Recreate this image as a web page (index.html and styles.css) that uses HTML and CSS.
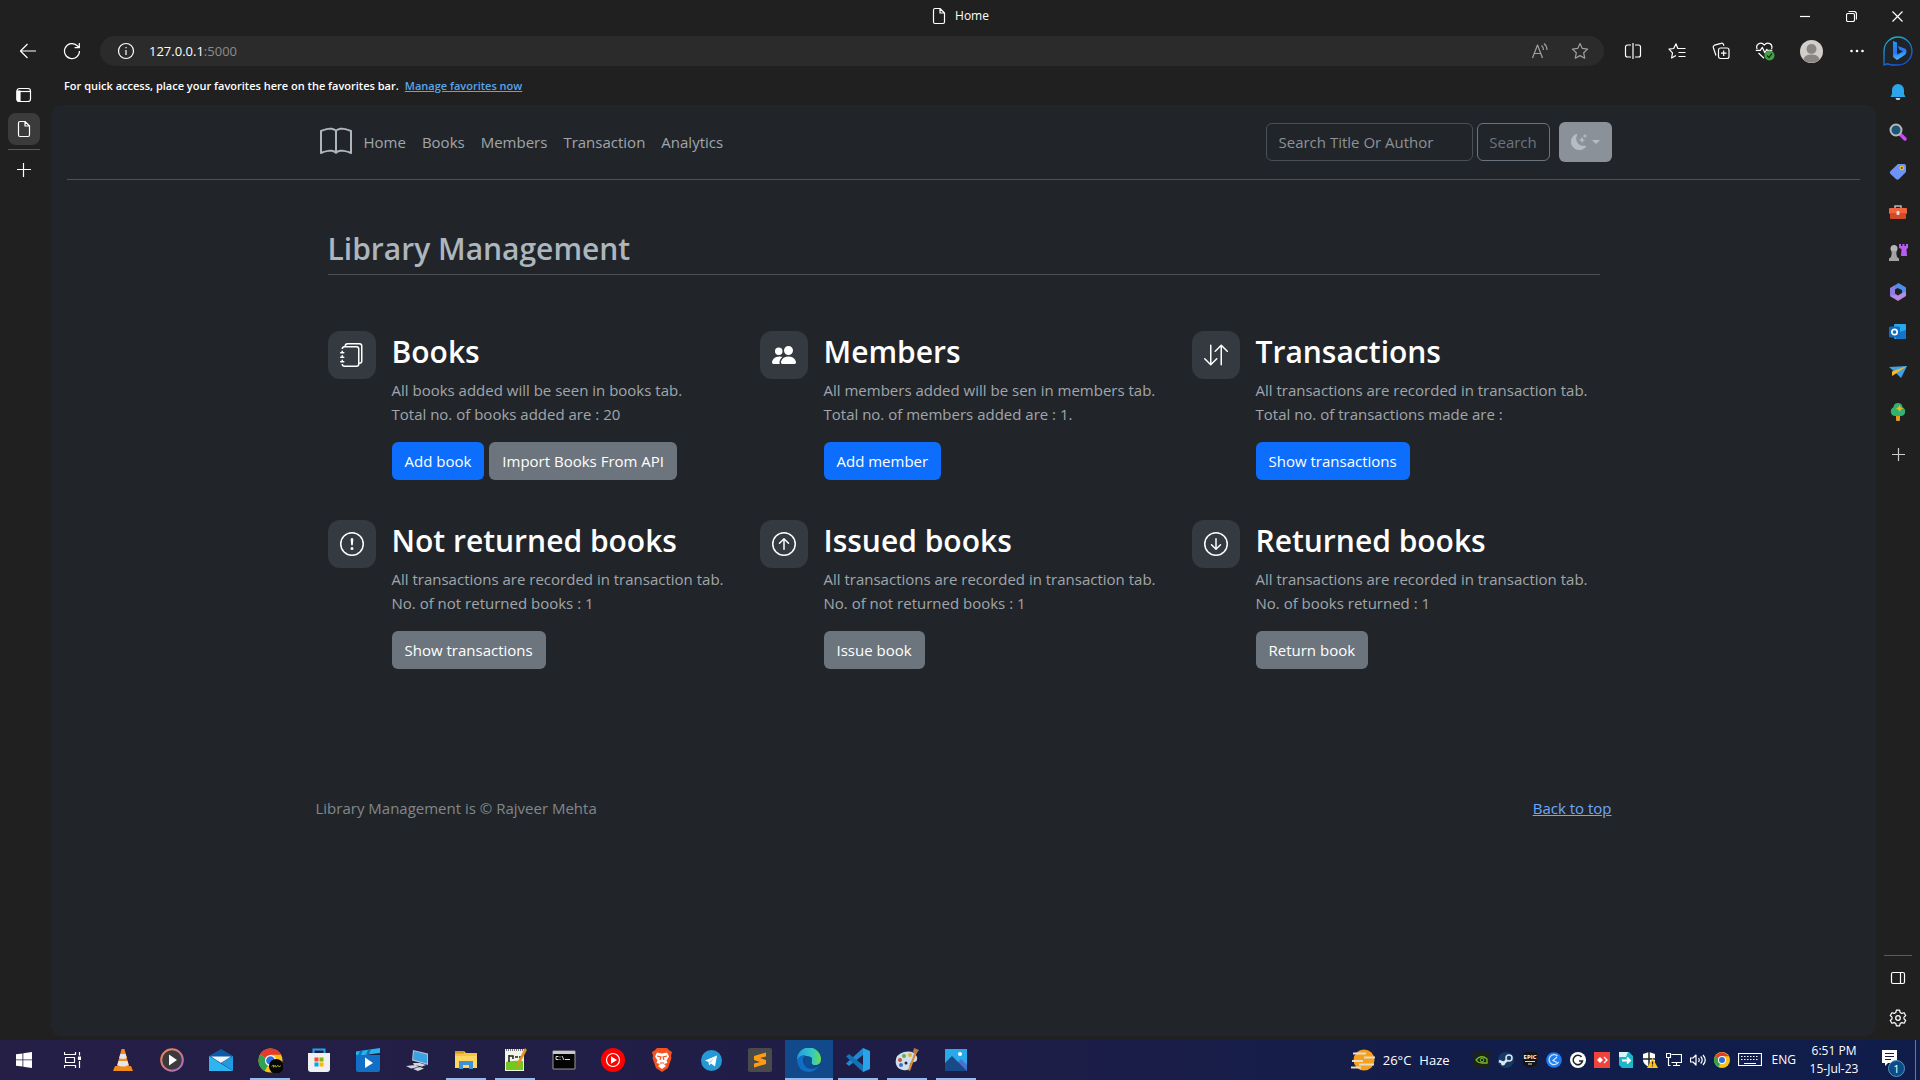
FILE: index.html
```html
<!DOCTYPE html>
<html lang="en">
<head>
<meta charset="utf-8">
<meta name="viewport" content="width=device-width, initial-scale=1">
<title>Home</title>
<link rel="stylesheet" href="styles.css">
</head>
<body>
<header class="titlebar">
  <div class="window-title">
    <svg class="line" width="16" height="18" viewBox="0 0 16 18"><path d="M4 1.500h5l4.500 4.500v9a1.500 1.500 0 0 1-1.500 1.500H4A1.500 1.500 0 0 1 2.500 15V3A1.500 1.500 0 0 1 4 1.500zM9 1.500V6h4.500"/></svg>
    <span>Home</span>
  </div>
  <div class="window-buttons">
    <button aria-label="Minimize"><svg class="line" width="10" height="10" viewBox="0 0 10 10"><path d="M0 5.500h10"/></svg></button>
    <button aria-label="Restore"><svg class="line" width="11" height="11" viewBox="0 0 11 11"><rect x=".5" y="2.500" width="8" height="8" rx="1.500"/><path d="M2.500.5H8A2.500 2.500 0 0 1 10.500 3v5.500"/></svg></button>
    <button aria-label="Close"><svg class="line" width="11" height="11" viewBox="0 0 11 11"><path d="M.5.5l10 10M10.500.5l-10 10"/></svg></button>
  </div>
</header>

<div class="toolbar">
  <div class="nav-buttons">
    <button aria-label="Back"><svg class="line" width="18" height="16" viewBox="0 0 18 16"><path d="M17 8H1.500M8.500 1l-7 7 7 7"/></svg></button>
    <button aria-label="Refresh"><svg class="line" width="18" height="18" viewBox="0 0 18 18"><path d="M16.500 9A7.500 7.500 0 1 1 14 3.500L16 5.500M16.300 1v4.700h-4.700"/></svg></button>
  </div>
  <div class="address">
    <svg class="line" width="18" height="18" viewBox="0 0 18 18"><circle cx="9" cy="9" r="7.500"/><path d="M9 8v5M9 5v1.300"/></svg>
    <span class="url">127.0.0.1<span class="port">:5000</span></span>
    <button class="dim" aria-label="Read aloud"><svg class="line" width="18" height="18" viewBox="0 0 18 18"><path d="M1.500 16L6.500 3l5 13M3.200 11.500h6.600M10.500 3.500q2 1.500 2 4.500M13 1.500q3 2.500 3 6.500"/></svg></button>
    <button class="dim" aria-label="Add to favorites"><svg class="line" width="18" height="18" viewBox="0 0 18 18"><path d="M9 1.500l2.300 4.900 5.300.7-3.900 3.700 1 5.400L9 13.600l-4.700 2.600 1-5.400L1.400 7.100l5.300-.7z"/></svg></button>
  </div>
  <div class="tools">
    <button aria-label="Split screen"><svg class="line" width="18" height="18" viewBox="0 0 18 18"><path d="M7 3H3.500A2 2 0 0 0 1.500 5v8a2 2 0 0 0 2 2H7M11 3h3.500a2 2 0 0 1 2 2v8a2 2 0 0 1-2 2H11M9 1v16"/></svg></button>
    <button aria-label="Favorites"><svg class="line" width="18" height="18" viewBox="0 0 18 18"><path d="M11 6.500H9.800L8 1.800 5.700 6.500 1 7.200l3.500 3.600-.9 5.200L8 13.500M10.500 6.500h7M10.500 10.500h7M10.500 14.500h7"/></svg></button>
    <button aria-label="Collections"><svg class="line" width="18" height="18" viewBox="0 0 18 18"><rect x="6.500" y="6" width="10.500" height="10.500" rx="2"/><path d="M11.700 8.500v5.500M9 11.200h5.500M4 13.500L1.300 5.500a2 2 0 0 1 1.200-2.300L9 1.300a2 2 0 0 1 2.500 1.200l.4 1.300"/></svg></button>
    <button aria-label="Browser essentials"><svg width="20" height="20" viewBox="0 0 20 20"><path class="stroke" d="M2.200 8C0 3.500 6 0 9.300 4 12.500 0 18.500 3 16.500 8M.8 9.300h4.500l2-3 2.500 5.500 2-3.500 1 1h4.500M3.500 12l5.500 5.300"/><circle cx="14.500" cy="14.500" r="5" fill="#46a046"/><path d="M12 14.500l2 2 3-4" fill="none" stroke="#16351a" stroke-width="1.300"/></svg></button>
    <button class="wide" aria-label="Profile"><svg width="23" height="23" viewBox="0 0 23 23"><circle cx="11.500" cy="11.500" r="11.500" fill="#d2cfca"/><circle cx="11.500" cy="9" r="5" fill="#8a8683"/><path d="M3.500 19.500q1-5 8-5t8 5a11.500 11.500 0 0 1-16 0" fill="#8a8683"/></svg></button>
    <button aria-label="Settings and more"><svg width="16" height="4" viewBox="0 0 16 4" fill="#fff"><circle cx="2.500" cy="2" r="1.300"/><circle cx="8" cy="2" r="1.300"/><circle cx="13.500" cy="2" r="1.300"/></svg></button>
    <button class="bing" aria-label="Bing"><svg width="30" height="30" viewBox="0 0 30 30"><defs><linearGradient id="ring" x1="0" y1="0" x2=".5" y2="1"><stop stop-color="#1db8d8"/><stop offset="1" stop-color="#1357d8"/></linearGradient><linearGradient id="bee" x1="0" y1="0" x2=".2" y2="1"><stop stop-color="#1d9bf3"/><stop offset=".6" stop-color="#2874f4"/><stop offset="1" stop-color="#49b6fa"/></linearGradient></defs><path d="M1 29V15A14 14 0 1 1 15 29H8q-3.500-2-7 0z" fill="#202429" stroke="url(#ring)" stroke-width="1.300"/><path d="M10 5l4 1.500v12l6-3-3.500-1.800-1.500-3.700 8 3q1.500 4-2 6.500L14 24l-4-3z" fill="url(#bee)"/></svg></button>
  </div>
</div>

<div class="favorites">
  <span>For quick access, place your favorites here on the favorites bar.</span>
  <a href="#">Manage favorites now</a>
</div>

<div class="workspace">
  <nav class="tabstrip" aria-label="Tabs">
    <button aria-label="Tab actions"><svg class="line" width="16" height="16" viewBox="0 0 16 16"><rect x="1" y="1.500" width="13.500" height="13" rx="2.500"/><path d="M1 4.500h13.500"/><path d="M1 4h3v10.500H3a2 2 0 0 1-2-2z" fill="#fff"/></svg></button>
    <button class="current" aria-label="Home tab"><svg class="line" width="16" height="18" viewBox="0 0 16 18"><path d="M4 1.500h5l4.500 4.500v9a1.500 1.500 0 0 1-1.500 1.500H4A1.500 1.500 0 0 1 2.500 15V3A1.500 1.500 0 0 1 4 1.500zM9 1.500V6h4.500"/></svg></button>
    <hr>
    <button aria-label="New tab"><svg class="line" width="14" height="14" viewBox="0 0 14 14"><path d="M6.500 0v14M0 6.500h14"/></svg></button>
  </nav>

  <div class="page">
    <header class="site-header">
      <div class="container navbar">
        <a class="brand" href="#" aria-label="Library"><svg width="32" height="32" viewBox="0 0 16 16" fill="currentColor"><path d="M1 2.828c.885-.37 2.154-.769 3.388-.893 1.330-.134 2.458.063 3.112.752v9.746c-.935-.53-2.120-.603-3.213-.493-1.180.12-2.370.461-3.287.811zm7.500-.141c.654-.689 1.782-.886 3.112-.752 1.234.124 2.503.523 3.388.893v9.923c-.918-.35-2.107-.692-3.287-.81-1.094-.111-2.278-.039-3.213.492zM8 1.783C7.015.936 5.587.81 4.287.94c-1.514.153-3.042.672-3.994 1.105A.5.5 0 0 0 0 2.500v11a.5.5 0 0 0 .707.455c.882-.4 2.303-.881 3.680-1.020 1.409-.142 2.590.087 3.223.877a.5.5 0 0 0 .78 0c.633-.79 1.814-1.019 3.222-.877 1.378.139 2.800.62 3.681 1.020A.5.5 0 0 0 16 13.500v-11a.5.5 0 0 0-.293-.455c-.952-.433-2.480-.952-3.994-1.105C10.413.809 8.985.936 8 1.783"/></svg></a>
        <nav class="links">
          <a href="#">Home</a><a href="#">Books</a><a href="#">Members</a><a href="#">Transaction</a><a href="#">Analytics</a>
        </nav>
        <form class="search">
          <input type="search" placeholder="Search Title Or Author" aria-label="Search title or author">
          <button type="button" class="btn outline">Search</button>
        </form>
        <button class="theme" aria-label="Toggle theme"><svg width="16" height="16" viewBox="0 0 16 16" fill="currentColor"><path d="M6 .278a.77.77 0 0 1 .08.858 7.200 7.200 0 0 0-.878 3.460c0 4.021 3.278 7.277 7.318 7.277q.792-.001 1.533-.16a.79.79 0 0 1 .81.316.73.73 0 0 1-.031.893A8.350 8.350 0 0 1 8.344 16C3.734 16 0 12.286 0 7.710 0 4.266 2.114 1.312 5.124.06A.75.75 0 0 1 6 .278"/><path d="M10.794 3.148a.217.217 0 0 1 .412 0l.387 1.162c.173.518.579.924 1.097 1.097l1.162.387a.217.217 0 0 1 0 .412l-1.162.387a1.730 1.730 0 0 0-1.097 1.097l-.387 1.162a.217.217 0 0 1-.412 0l-.387-1.162A1.730 1.730 0 0 0 9.310 6.593l-1.162-.387a.217.217 0 0 1 0-.412l1.162-.387a1.730 1.730 0 0 0 1.097-1.097zM13.863.099a.145.145 0 0 1 .274 0l.258.774c.115.346.386.617.732.732l.774.258a.145.145 0 0 1 0 .274l-.774.258a1.160 1.160 0 0 0-.732.732l-.258.774a.145.145 0 0 1-.274 0l-.258-.774a1.160 1.160 0 0 0-.732-.732l-.774-.258a.145.145 0 0 1 0-.274l.774-.258c.346-.115.617-.386.732-.732z"/></svg><i class="caret"></i></button>
      </div>
    </header>

    <main class="container content">
      <h1>Library Management</h1>
      <div class="features">
        <section class="feature">
          <div class="badge"><svg width="24" height="24" viewBox="0 0 16 16" fill="currentColor"><path d="M5 0h8a2 2 0 0 1 2 2v10a2 2 0 0 1-2 2 2 2 0 0 1-2 2H3a2 2 0 0 1-2-2h1a1 1 0 0 0 1 1h8a1 1 0 0 0 1-1V4a1 1 0 0 0-1-1H3a1 1 0 0 0-1 1H1a2 2 0 0 1 2-2h8a2 2 0 0 1 2 2v9a1 1 0 0 0 1-1V2a1 1 0 0 0-1-1H5a1 1 0 0 0-1 1H3a2 2 0 0 1 2-2"/><path d="M1 6v-.5a.5.5 0 0 1 1 0V6h.5a.5.5 0 0 1 0 1h-2a.5.5 0 0 1 0-1zm0 3v-.5a.5.5 0 0 1 1 0V9h.5a.5.5 0 0 1 0 1h-2a.5.5 0 0 1 0-1zm0 2.500v.5H.5a.5.5 0 0 0 0 1h2a.5.5 0 0 0 0-1H2v-.5a.5.5 0 0 0-1 0"/></svg></div>
          <div>
            <h2>Books</h2>
            <p>All books added will be seen in books tab.<br>Total no. of books added are : 20</p>
            <div class="actions"><button class="btn primary">Add book</button><button class="btn secondary">Import Books From API</button></div>
          </div>
        </section>
        <section class="feature">
          <div class="badge"><svg width="24" height="24" viewBox="0 0 16 16" fill="currentColor"><path d="M7 14s-1 0-1-1 1-4 5-4 5 3 5 4-1 1-1 1zm4-6a3 3 0 1 0 0-6 3 3 0 0 0 0 6m-5.784 6A2.240 2.240 0 0 1 5 13c0-1.355.68-2.750 1.936-3.720A6.300 6.300 0 0 0 5 9c-4 0-5 3-5 4s1 1 1 1zM4.500 8a2.500 2.500 0 1 0 0-5 2.500 2.500 0 0 0 0 5"/></svg></div>
          <div>
            <h2>Members</h2>
            <p>All members added will be sen in members tab.<br>Total no. of members added are : 1.</p>
            <div class="actions"><button class="btn primary">Add member</button></div>
          </div>
        </section>
        <section class="feature">
          <div class="badge"><svg width="24" height="24" viewBox="0 0 16 16" fill="currentColor"><path d="M11.500 15a.5.5 0 0 0 .5-.5V2.707l3.146 3.147a.5.5 0 0 0 .708-.708l-4-4a.5.5 0 0 0-.708 0l-4 4a.5.5 0 1 0 .708.708L11 2.707V14.500a.5.5 0 0 0 .5.5m-7-14a.5.5 0 0 1 .5.5v11.793l3.146-3.147a.5.5 0 0 1 .708.708l-4 4a.5.5 0 0 1-.708 0l-4-4a.5.5 0 0 1 .708-.708L4 13.293V1.500a.5.5 0 0 1 .5-.5"/></svg></div>
          <div>
            <h2>Transactions</h2>
            <p>All transactions are recorded in transaction tab.<br>Total no. of transactions made are :</p>
            <div class="actions"><button class="btn primary">Show transactions</button></div>
          </div>
        </section>
        <section class="feature">
          <div class="badge"><svg width="24" height="24" viewBox="0 0 16 16" fill="currentColor"><path d="M8 15A7 7 0 1 1 8 1a7 7 0 0 1 0 14m0 1A8 8 0 1 0 8 0a8 8 0 0 0 0 16"/><path d="M7.002 11a1 1 0 1 1 2 0 1 1 0 0 1-2 0M7.100 4.995a.905.905 0 1 1 1.800 0l-.35 3.507a.552.552 0 0 1-1.100 0z"/></svg></div>
          <div>
            <h2>Not returned books</h2>
            <p>All transactions are recorded in transaction tab.<br>No. of not returned books : 1</p>
            <div class="actions"><button class="btn secondary">Show transactions</button></div>
          </div>
        </section>
        <section class="feature">
          <div class="badge"><svg width="24" height="24" viewBox="0 0 16 16" fill="currentColor"><path d="M1 8a7 7 0 1 0 14 0A7 7 0 0 0 1 8m15 0A8 8 0 1 1 0 8a8 8 0 0 1 16 0m-7.500 3.500a.5.5 0 0 1-1 0V5.707L5.354 7.854a.5.5 0 1 1-.708-.708l3-3a.5.5 0 0 1 .708 0l3 3a.5.5 0 0 1-.708.708L8.500 5.707z"/></svg></div>
          <div>
            <h2>Issued books</h2>
            <p>All transactions are recorded in transaction tab.<br>No. of not returned books : 1</p>
            <div class="actions"><button class="btn secondary">Issue book</button></div>
          </div>
        </section>
        <section class="feature">
          <div class="badge"><svg width="24" height="24" viewBox="0 0 16 16" fill="currentColor"><path d="M1 8a7 7 0 1 0 14 0A7 7 0 0 0 1 8m15 0A8 8 0 1 1 0 8a8 8 0 0 1 16 0M8.500 4.500a.5.5 0 0 0-1 0v5.793L5.354 8.146a.5.5 0 1 0-.708.708l3 3a.5.5 0 0 0 .708 0l3-3a.5.5 0 0 0-.708-.708L8.500 10.293z"/></svg></div>
          <div>
            <h2>Returned books</h2>
            <p>All transactions are recorded in transaction tab.<br>No. of books returned : 1</p>
            <div class="actions"><button class="btn secondary">Return book</button></div>
          </div>
        </section>
      </div>
    </main>

    <footer class="container site-footer">
      <span>Library Management is © Rajveer Mehta</span>
      <a href="#">Back to top</a>
    </footer>
  </div>

  <aside class="sidebar" aria-label="Sidebar">
    <button aria-label="Notifications"><svg width="18" height="18" viewBox="0 0 18 18"><path d="M9 1a6 6 0 0 0-6 6v4l-1.500 3h15L15 11V7a6 6 0 0 0-6-6" fill="#2ba5ec"/><path d="M6.500 15h5l-1 2h-3z" fill="#c9c9c9"/></svg></button>
    <button aria-label="Search"><svg width="18" height="18" viewBox="0 0 18 18"><path d="M11 11l5 5" stroke="#c94bf0" stroke-width="3.500" stroke-linecap="round"/><circle cx="7" cy="7" r="5.500" fill="#1c5576" stroke="#b8b8b8" stroke-width="2"/></svg></button>
    <button aria-label="Shopping"><svg width="18" height="18" viewBox="0 0 18 18"><path d="M9 1h6a2 2 0 0 1 2 2v6l-7 7q-1.500 1.500-3 0L1.500 11Q0 9.500 1.500 8z" fill="#6f92f8"/><circle cx="12.800" cy="5" r="1.700" fill="#4a4a30" stroke="#e8c522" stroke-width="1.300"/></svg></button>
    <button aria-label="Tools"><svg width="18" height="18" viewBox="0 0 18 18"><path d="M6 6V3h6v3" fill="none" stroke="#b8b8b8" stroke-width="1.500"/><rect y="5" width="18" height="6" rx="1" fill="#f0653d"/><path d="M1 10h16v5a1 1 0 0 1-1 1H2a1 1 0 0 1-1-1z" fill="#d54a26"/><rect x="7.500" y="8" width="3" height="4" rx="1" fill="#ddd"/></svg></button>
    <button aria-label="Games"><svg width="20" height="20" viewBox="0 0 20 20"><path d="M11 2h2v2h1.500V2h2v2H18V2h2v4l-1.500 1 .5 7h-6l.5-7L11 6z" fill="#b95cf2"/><circle cx="6" cy="6.500" r="3.500" fill="#b5b5b5"/><path d="M3 9.500h6l-.8 1.500.8 4 2 1.500V19H1v-2.500L3 15l.8-4z" fill="#a3a3a3"/></svg></button>
    <button aria-label="Microsoft 365"><svg width="18" height="18" viewBox="0 0 18 18"><path d="M9.500 0L6 2.500v8L9 12.500 4.500 15 1 13V5z" fill="#8e7ce0"/><path d="M9.500 0L17 4.500V13l-4-2V7L8.500 5 6 6.500v-4z" fill="#4a8fe8"/><path d="M17 8.500V13l-8 5-8-5 3.500-1 4.500.5 4-2.500z" fill="#b48ae2"/></svg></button>
    <button aria-label="Outlook"><svg width="18" height="18" viewBox="0 0 18 18"><rect x="5" y="1" width="12" height="15" rx="1" fill="#28a8ea"/><path d="M8 10l9-3v9H7z" fill="#1374cc"/><rect y="3.500" width="11" height="11" rx="1.500" fill="#0f6cc4"/><circle cx="5.500" cy="9" r="2.700" fill="none" stroke="#fff" stroke-width="1.700"/></svg></button>
    <button aria-label="Drop"><svg width="18" height="18" viewBox="0 0 18 18"><path d="M0 4l18-1-6 12-4-4z" fill="#3ca0ee"/><path d="M18 3L3 8.500V13l4-2.500z" fill="#f5b923"/></svg></button>
    <button aria-label="E-tree"><svg width="18" height="18" viewBox="0 0 18 18"><rect x="7" y="11" width="4" height="7" rx="1" fill="#e59b20"/><path d="M9 0q4 0 4.500 4Q17 6 16 10q-1 3-4 3H6q-3 0-4-3-1-4 2.500-6Q5 0 9 0" fill="#2fb36f"/><path d="M10.500 2l1.200 2.300L14 5.500l-2.300 1.200L10.500 9 9.300 6.700 7 5.500l2.300-1.200z" fill="#f0b323"/></svg></button>
    <button class="add" aria-label="Customize"><svg class="line faint" width="13" height="13" viewBox="0 0 13 13"><path d="M6.500 0v13M0 6.500h13"/></svg></button>
    <div class="spacer"></div>
    <hr>
    <button aria-label="Hide sidebar"><svg class="line" width="16" height="16" viewBox="0 0 16 16"><rect x="1.500" y="2.500" width="13" height="11" rx="1.500"/><path d="M10.500 2.500v11"/></svg></button>
    <button aria-label="Settings"><svg class="line" width="18" height="18" viewBox="0 0 18 18"><circle cx="9" cy="9" r="2.300"/><path d="M7.400 1.200h3.200l.6 2.300 1.600.9 2.300-.7 1.600 2.800-1.700 1.600v1.800l1.700 1.600-1.600 2.800-2.300-.7-1.600.9-.6 2.300H7.400l-.6-2.300-1.600-.9-2.300.7-1.600-2.800L3 9.900V8.100L1.300 6.500l1.600-2.800 2.300.7 1.600-.9z"/></svg></button>
  </aside>
</div>

<footer class="taskbar">
  <div class="system">
    <button aria-label="Start"><svg width="16" height="16" viewBox="0 0 16 16" fill="#fff"><path d="M0 2.300L6.500 1.400v6.100H0zM7.300 1.300L16 0v7.500H7.300zM0 8.300h6.500v6.300L0 13.700zM7.300 8.300H16V16l-8.700-1.200z"/></svg></button>
    <button aria-label="Task view"><svg class="line" width="17" height="16" viewBox="0 0 17 16"><path d="M.5 0v2.500h11V0M.5 16v-2.500h11V16M1.500 5.500h9v5h-9zM15.500 0v3.500M15.500 9v7"/><rect x="14.500" y="5" width="2" height="2.500" fill="#fff"/></svg></button>
  </div>
  <div class="apps">
    <button aria-label="VLC"><svg width="24" height="24" viewBox="0 0 24 24"><path d="M4 18h16l2 5H2z" fill="#f08a1c"/><path d="M10.500 1h3L18 18q-6 4-12 0z" fill="#f28a1e"/><path d="M9.300 6h5.400l1.100 4q-3.800 2-7.600 0zM7.500 13h9l1.200 4q-5.700 3-11.400 0z" fill="#e3e6ea"/></svg></button>
    <button aria-label="Media player"><svg width="24" height="24" viewBox="0 0 24 24"><defs><linearGradient id="mp" x1="0" y1="0" x2="1" y2="1"><stop stop-color="#f38a3e"/><stop offset="1" stop-color="#a76bd0"/></linearGradient></defs><circle cx="12" cy="12" r="10.800" fill="#3b3b3f" stroke="url(#mp)" stroke-width="2"/><path d="M9 6.500l8 5.500-8 5.500z" fill="#fff"/></svg></button>
    <button aria-label="Mail"><svg width="24" height="24" viewBox="0 0 24 24"><path d="M0 8l12-7 12 7v5H0z" fill="#0b5ba8"/><path d="M2 8.500h20L12 15z" fill="#f3f3f3"/><path d="M0 8l24 15H0z" fill="#2fb4f2"/><path d="M24 8v15L12 15z" fill="#2399e0"/></svg></button>
    <button class="running" aria-label="Chrome"><svg width="25" height="25" viewBox="0 0 24 24"><circle cx="12" cy="12" r="11.500" fill="#fbc116"/><path d="M12 12L6.500 22A11.500 11.500 0 0 1 2 6.200z" fill="#31a350"/><path d="M12 12L2 6.200A11.500 11.500 0 0 1 22 6.500H12z" fill="#e33b2e"/><circle cx="12" cy="12" r="5.300" fill="#fff"/><circle cx="12" cy="12" r="4.200" fill="#2c6fe0"/><circle cx="17.500" cy="17.500" r="7" fill="#050505"/><path d="M13 17.500l2-1v2l1.500-2 1 2 1.500-2 1 1.500 2-1" fill="none" stroke="#a6b32c" stroke-width=".9"/></svg></button>
    <button aria-label="Microsoft Store"><svg width="24" height="24" viewBox="0 0 24 24"><path d="M6.500 6V1.500h11V6" fill="none" stroke="#23a5ea" stroke-width="2"/><path d="M1 5h22v16a3 3 0 0 1-3 3H4a3 3 0 0 1-3-3z" fill="#f0f0f0"/><path d="M7.500 9.500h4v4h-4z" fill="#f25022"/><path d="M12.500 9.500h4v4h-4z" fill="#7fba00"/><path d="M7.500 14.500h4v4h-4z" fill="#00a4ef"/><path d="M12.500 14.500h4v4h-4z" fill="#ffb900"/></svg></button>
    <button aria-label="Movies"><svg width="24" height="24" viewBox="0 0 24 24"><path d="M0 3.500L24 0v5L0 8z" fill="#25b4f1"/><path d="M4 3l3-.5L5 7H2zM12 2l3-.5L13 6h-3z" fill="#0c71bd"/><path d="M0 7h24v15a2 2 0 0 1-2 2H2a2 2 0 0 1-2-2z" fill="#116fc6"/><path d="M9 9.500l8 5.500-8 5z" fill="#fff"/></svg></button>
    <button aria-label="Remote desktop"><svg width="24" height="24" viewBox="0 0 24 24"><path d="M8 2l15 3.500V17L7 12.500z" fill="#b4c0cc"/><path d="M9 3.200l13 3.300v9L8 11.500z" fill="#3aa3e8"/><path d="M8 15l7 0 6 2-4 1.500-8-1.500zM1 18l9-1 4 2-8 1.500zM8 21l7-2 4 1.500-6 2.500z" fill="#cfd5da"/></svg></button>
    <button class="running" aria-label="File explorer"><svg width="24" height="24" viewBox="0 0 24 24"><path d="M1 3h9l2 2h11v15H1z" fill="#f6c445"/><path d="M1 3h9v2.500H1z" fill="#d99a1a"/><path d="M1 8h22v12H1z" fill="#fdd663"/><path d="M5 21v-8h14v8h-4v-4H9v4z" fill="#3f90d4"/></svg></button>
    <button class="running" aria-label="Notepad++"><svg width="24" height="24" viewBox="0 0 24 24"><path d="M2 1h19v22H2z" fill="#f2f5e8"/><path d="M3 14q9-2 17-1v9H3z" fill="#72c81e"/><path d="M3 2h17" stroke="#777" stroke-width="2" stroke-dasharray="1 1"/><path d="M6 7v7M6 8h4v3M12 9h3M16 9h2" stroke="#222" stroke-width="1.500" fill="none"/><path d="M22 0l2 2-8 15-3 2 1-4z" fill="#dd9420"/></svg></button>
    <button aria-label="Command prompt"><svg width="24" height="24" viewBox="0 0 24 24"><path d="M1 3h22v18H1z" fill="#030303" stroke="#999"/><path d="M1 3h22v3H1z" fill="#c8c8c8"/><path d="M4 8.500h2.500M4 8.500v3h2.500M8 8.500v1M8 11v1M10 8l2 4M13 11.500h5" stroke="#ddd" fill="none"/></svg></button>
    <button aria-label="YouTube Music"><svg width="24" height="24" viewBox="0 0 24 24"><circle cx="12" cy="12" r="12" fill="#f00"/><circle cx="12" cy="12" r="6.500" fill="none" stroke="#fff" stroke-width="1.200"/><path d="M10 8.300l6 3.700-6 3.700z" fill="#fff"/></svg></button>
    <button aria-label="Brave"><svg width="22" height="24" viewBox="0 0 22 24"><path d="M6 0h10l2.500 2.500L21 4l-1 4 .5 2L17 20l-6 4-6-4L1.500 10 2 8 1 4l2.500-1.500z" fill="#f4511e"/><path d="M6 4.500l5 1 5-1 2 4-2.500 4 1 2.500L13 16l2 2-4 3-4-3 2-2-3.500-1 1-2.500L4 8.500z" fill="#fff"/><path d="M6 8l4 1-1 3M16 8l-4 1 1 3M9 15h4" fill="none" stroke="#f4511e" stroke-width="1.200"/></svg></button>
    <button aria-label="Telegram"><svg width="21" height="21" viewBox="0 0 21 21"><circle cx="10.500" cy="10.500" r="10.500" fill="#2499d4"/><path d="M4 10.500L16 5.500l-2 11-4-3-2 2-.5-3.500z" fill="#fff"/><path d="M8 12l5-4-3.500 5z" fill="#a7cfe8"/></svg></button>
    <button aria-label="Sublime Text"><svg width="24" height="24" viewBox="0 0 24 24"><rect width="24" height="24" rx="2" fill="#4a4a4a"/><path d="M6 8l12-3.500v4L12 10l6 2v4L6 19.500v-4l6-1.500-6-2z" fill="#ff9b13"/></svg></button>
    <button class="active" aria-label="Edge"><svg width="24" height="24" viewBox="0 0 24 24"><defs><linearGradient id="edge"><stop stop-color="#249ce0"/><stop offset=".6" stop-color="#32c6c9"/><stop offset="1" stop-color="#67e04d"/></linearGradient></defs><path d="M0 12A12 12 0 0 1 24 11q0 6-6 6-5 0-3-4 0-5-6-5-6 0-9 4" fill="url(#edge)"/><path d="M0 12q2-5 9-5-4 2-3 7 2 7 9 7 4 0 7-3-4 6-11 6Q1 23 0 12" fill="#0f6dc4"/><path d="M9 11q3-4 6-1-2 4 1 7-6-1-6 3-4-4-1-9" fill="#0c4f98"/></svg></button>
    <button class="running" aria-label="Visual Studio Code"><svg width="24" height="24" viewBox="0 0 24 24"><path d="M17 0l7 3v18l-7 3z" fill="#29a4ea"/><path d="M17 0v7L3 18l-3-2.500z" fill="#2187cf"/><path d="M17 24v-7L3 6 0 8.500z" fill="#1372b6"/></svg></button>
    <button class="running" aria-label="Paint"><svg width="24" height="24" viewBox="0 0 24 24"><path d="M1 16Q-1 7 9 4q10-2 13 5 1 6-5 5-3 1-2 5-1 4-7 3Q2 21 1 16" fill="#cde0ec"/><circle cx="5" cy="12" r="2" fill="#d44a3a"/><circle cx="9" cy="8" r="2" fill="#69ad4c"/><circle cx="15" cy="7" r="2" fill="#e5b02c"/><circle cx="6" cy="17" r="2" fill="#3b73c4"/><circle cx="11" cy="15" r="1.500" fill="#22204a"/><path d="M20 3l2 1-7 19-2-1z" fill="#d98a3a"/><path d="M19 0l5 2-3 4-3-2z" fill="#b97c49"/></svg></button>
    <button class="running" aria-label="Photos"><svg width="22" height="22" viewBox="0 0 22 22"><path d="M0 0h22v22H0z" fill="#29a8ea"/><path d="M11 15l5-5 6 6v6h-8z" fill="#4b6fd4"/><path d="M0 14l7-7 15 15H0z" fill="#174a86"/><circle cx="15" cy="5" r="2" fill="#fff"/></svg></button>
  </div>
  <div class="weather">
    <svg width="24" height="24" viewBox="0 0 24 24"><circle cx="13" cy="12" r="10.500" fill="#f7a01c"/><path d="M2 5.500h13M13 9.500h11M1 13h11M8 16.500h15M0 19.500h10" stroke="#e6dccb" stroke-width="2"/></svg>
    <span>26°C</span><span>Haze</span>
  </div>
  <div class="tray">
    <svg width="16" height="16" viewBox="0 0 16 16"><path d="M0 0h16v16H0z" fill="#1d231b"/><path d="M2 8q5-6 11-1v4H8q-4 0-6-3z" fill="none" stroke="#76b92b" stroke-width="1.300"/><circle cx="8" cy="8" r="1.800" fill="none" stroke="#76b92b"/></svg>
    <svg width="16" height="16" viewBox="0 0 16 16"><circle cx="8" cy="8" r="8" fill="#163a66"/><path d="M1 9l5 2 5-5" stroke="#dfe6ee" stroke-width="2.500" fill="none"/><circle cx="11" cy="6" r="3" fill="#163a66" stroke="#dfe6ee" stroke-width="1.500"/><circle cx="5" cy="11.500" r="2" fill="#dfe6ee"/></svg>
    <svg width="16" height="16" viewBox="0 0 16 16"><path d="M1 0h14v13l-7 3-7-3z" fill="#161616"/><text x="8" y="7" text-anchor="middle" class="epic">EPIC</text><path d="M3 9.500h10M6 12h4" stroke="#ddd"/></svg>
    <svg width="16" height="16" viewBox="0 0 16 16"><circle cx="8" cy="8" r="7.800" fill="#1d7df0"/><path d="M11.500 4a5 5 0 1 0 1 6M11 5L7 8.500l4 2" fill="none" stroke="#cfe4ff" stroke-width="1.300"/></svg>
    <svg width="16" height="16" viewBox="0 0 16 16"><circle cx="8" cy="8" r="8" fill="#fff"/><path d="M11.500 5a4.700 4.700 0 1 0 1 4H9" fill="none" stroke="#222" stroke-width="1.500"/></svg>
    <svg width="16" height="16" viewBox="0 0 16 16"><path d="M0 0h16v16H0z" fill="#ef443b"/><path d="M6 5l3 3-3 3-3-3z" fill="#fff"/><path d="M10 5l3 3-3 3" fill="none" stroke="#fff" stroke-width="1.300"/></svg>
    <svg width="16" height="16" viewBox="0 0 16 16"><path d="M1 0h10l4 4v12H4l-3-3z" fill="#1cb6c9"/><path d="M1 0h9l-2 5H1z" fill="#d9f4f7"/><path d="M4 8.500h8M9 5.500l3 3-3 3" stroke="#fff" stroke-width="1.800" fill="none"/></svg>
    <svg width="16" height="16" viewBox="0 0 16 16"><path d="M1 2l6-2 6 2v6q0 4-6 7-6-3-6-7z" fill="#fff"/><path d="M7 0v15M1 7h12" stroke="#222" stroke-width="1.500"/><path d="M10.500 6l5.500 10H5z" fill="#fcc419"/><path d="M10.500 9.500v3M10.500 13.500v1" stroke="#222" stroke-width="1.200"/></svg>
    <svg class="line" width="16" height="16" viewBox="0 0 16 16"><path d="M5.500 2.500h10v8h-10M10.500 10.500v3M7 13.500h7M.5 1.500h4v4h-4zM2.500 5.500v8h2"/></svg>
    <svg class="line" width="16" height="16" viewBox="0 0 16 16"><path d="M.5 6v4H3l3 3V3L3 6zM8.500 6q1.500 2 0 4M10.700 4.500q3 3.500 0 7M13 3q4.500 5 0 10"/></svg>
    <svg width="16" height="16" viewBox="0 0 24 24"><circle cx="12" cy="12" r="12" fill="#fbc116"/><path d="M12 12L6.500 23A12 12 0 0 1 2 6z" fill="#31a350"/><path d="M12 12L2 6A12 12 0 0 1 22 6.500H12z" fill="#e33b2e"/><circle cx="12" cy="12" r="6" fill="#fff"/><circle cx="12" cy="12" r="4.500" fill="#2c6fe0"/></svg>
    <svg class="line" width="24" height="14" viewBox="0 0 24 14"><path d="M.5.5h23v12H.5zM6 10.500h12"/><path d="M3 3.500h18M3 6.500h18" stroke-dasharray="1.500 1.500"/></svg>
  </div>
  <span class="lang">ENG</span>
  <div class="clock"><span>6:51 PM</span><span>15-Jul-23</span></div>
  <button class="notify" aria-label="Notifications"><svg width="28" height="28" viewBox="0 0 28 28"><path d="M2 4h15v13H8l-3 3v-3H2z" fill="#fff"/><path d="M5 7.500h9M5 10.500h9M5 13.500h6" stroke="#111c49"/></svg><span class="count">1</span></button>
</footer>
</body>
</html>
```
FILE: styles.css
```css
* { box-sizing: border-box; }

body {
  margin: 0;
  min-height: 100vh;
  display: flex;
  flex-direction: column;
  background: #202020;
  color: #fff;
  font-family: "Open Sans", "Noto Sans", sans-serif;
  font-size: 15px;
  line-height: 24px;
}

button {
  font: inherit;
  color: inherit;
  background: none;
  border: 0;
  padding: 0;
  display: flex;
  align-items: center;
  justify-content: center;
}

svg { display: block; flex: none; }
.line, .stroke { fill: none; stroke: #fff; stroke-width: 1.2; stroke-linejoin: round; }
.faint { stroke: #ccc; }

/* Browser window */
.titlebar {
  height: 32px;
  display: grid;
  grid-template-columns: 1fr auto 1fr;
  align-items: center;
}
.window-title {
  grid-column: 2;
  display: flex;
  align-items: center;
  gap: 8px;
  font-size: 12px;
}
.window-buttons { display: flex; justify-content: flex-end; }
.window-buttons button { width: 46px; height: 32px; }

.toolbar {
  height: 38px;
  display: flex;
  align-items: center;
  padding: 0 3px 0 6px;
}
.nav-buttons, .tools { display: flex; align-items: center; }
.nav-buttons button, .tools button { width: 44px; height: 30px; }
.tools .wide { width: 48px; }
.tools .bing { width: 38px; }
.address {
  flex: 1;
  height: 30px;
  margin: 0 7px 0 6px;
  padding: 0 4px 0 17px;
  display: flex;
  align-items: center;
  gap: 14px;
  border-radius: 15px;
  background: #2b2b2b;
  font-size: 13px;
}
.url { flex: 1; }
.port { color: #8c8c8c; }
.address button { width: 40px; margin-left: -14px; }
.dim { opacity: .55; }

.favorites {
  height: 31px;
  margin-bottom: 4px;
  padding: 0 64px;
  display: flex;
  align-items: center;
  gap: 6px;
  font-size: 11px;
  font-weight: 600;
}
.favorites a { color: #58a6ea; }

.workspace { flex: 1; display: flex; padding-bottom: 4px; }

.tabstrip { width: 51px; padding-left: 8px; }
.tabstrip button { width: 32px; height: 32px; border-radius: 8px; margin-bottom: 4px; }
.tabstrip button:first-child { margin: -26px 0 2px; }
.tabstrip .current { background: #3b3b3b; }
.tabstrip hr { width: 32px; height: 1px; margin: 0 0 4px; border: 0; background: #5a5a5a; }

.sidebar {
  width: 44px;
  display: flex;
  flex-direction: column;
  align-items: center;
  margin: -33px 0 -2px;
}
.sidebar button { width: 40px; height: 40px; }
.sidebar .add { margin-top: 2px; }
.sidebar .spacer { flex: 1; }
.sidebar hr { width: 28px; height: 1px; margin: 0 0 2px; border: 0; background: #5a5a5a; }

/* Library page */
.page { flex: 1; background: #212529; border-radius: 10px; }
.container { max-width: 1320px; margin: 0 auto; padding: 0 12px; }

.site-header { margin: 0 16px; border-bottom: 1px solid #4d5154; }
.navbar { height: 74px; display: flex; align-items: center; color: #adb5bd; }
.brand { color: inherit; margin: 0 12px 0 4px; }
.links { flex: 1; display: flex; gap: 16px; }
.links a { color: #a0a6ac; text-decoration: none; }
.search { display: flex; gap: 4px; }
.search input {
  width: 207px;
  height: 38px;
  padding: 0 12px;
  border: 1px solid #495057;
  border-radius: 6px;
  background: #212529;
  color: #adb5bd;
  font: inherit;
}
.search input::placeholder { color: #8d9297; opacity: 1; }

.btn { height: 38px; padding: 0 12px; border: 1px solid transparent; border-radius: 6px; color: #fff; }
.outline { width: 73px; border-color: #6c757d; color: #6c757d; }
.primary { background: #0d6efd; }
.secondary { background: #6c757d; }
.theme {
  width: 53px;
  height: 40px;
  margin-left: 9px;
  gap: 5px;
  border-radius: 6px;
  background: #8a9199;
  color: #b5bcc4;
}
.caret { border: 4px solid transparent; border-top-color: currentColor; border-bottom: 0; }

.content { padding: 48px 24px; }
h1, h2 { margin: 0; font-size: 30px; font-weight: 600; line-height: 42px; }
h1 { padding-bottom: 4px; border-bottom: 1px solid #4d5154; color: #adb5bd; }
.features {
  display: grid;
  grid-template-columns: repeat(3, 1fr);
  gap: 40px 24px;
  padding-top: 56px;
}
.feature { display: flex; gap: 16px; }
.badge {
  flex: none;
  width: 48px;
  height: 48px;
  display: flex;
  align-items: center;
  justify-content: center;
  border-radius: 12px;
  background: #343a40;
}
.feature p { margin: 5px 0 16px; color: #a0a6ac; }
.actions { display: flex; gap: 5px; }

.site-footer {
  display: flex;
  justify-content: space-between;
  padding-top: 79px;
  color: #82878c;
}
.site-footer a { color: #6ea8fe; }

/* Taskbar */
.taskbar {
  height: 40px;
  display: flex;
  align-items: center;
  background: linear-gradient(90deg, #251f46, #1e1d47 50%, #111d4b 80%, #101c4a);
  font-size: 13px;
}
.system, .apps { display: flex; }
.system button, .apps button { width: 48px; height: 40px; }
.apps { flex: 1; gap: 1px; margin-left: 3px; }
.running { background: linear-gradient(#8fbff0, #8fbff0) bottom / 40px 2px no-repeat; }
.apps .active { background: #12498a; box-shadow: inset 0 -2px #8fbff0; }
.weather { display: flex; align-items: center; gap: 8px; margin-right: 24px; }
.tray { display: flex; align-items: center; gap: 8px; }
.epic { font-size: 6px; font-weight: 700; fill: #fff; }
.lang { margin-left: 10px; font-size: 12px; }
.clock {
  width: 76px;
  display: flex;
  flex-direction: column;
  text-align: center;
  font-size: 12px;
  line-height: 18px;
}
.notify { position: relative; width: 44px; height: 40px; border-right: 1px solid #6d7494; margin-right: 4px; }
.count {
  position: absolute;
  right: 10px;
  bottom: 3px;
  width: 17px;
  height: 17px;
  border: 1px solid #5795c4;
  border-radius: 50%;
  background: #0b4c86;
  font-size: 11px;
  line-height: 15px;
}
```
